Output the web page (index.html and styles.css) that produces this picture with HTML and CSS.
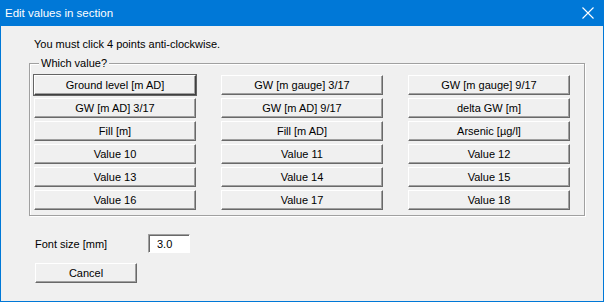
FILE: index.html
```html
<!DOCTYPE html>
<html lang="en">
<head>
<meta charset="UTF-8" />
<title>Edit values in section</title>
<link rel="stylesheet" href="styles.css">
</head>
<body>
<div class="window">
    <div class="titlebar">
        <span class="title">Edit values in section</span>
        <svg class="close" width="12" height="12" viewBox="0 0 12 12">
            <path d="M0.5 0.5 L11.5 11.5 M11.5 0.5 L0.5 11.5" stroke="#fff" stroke-width="1.1" fill="none"/>
        </svg>
    </div>

    <div class="content">
        <p class="msg">You must click 4 points anti-clockwise.</p>

        <fieldset class="group">
            <legend>Which value?</legend>
            <div class="grid">
                <button class="btn default">Ground level [m AD]</button>
                <button class="btn">GW [m gauge] 3/17</button>
                <button class="btn">GW [m gauge] 9/17</button>
                <button class="btn">GW [m AD] 3/17</button>
                <button class="btn">GW [m AD] 9/17</button>
                <button class="btn">delta GW [m]</button>
                <button class="btn">Fill [m]</button>
                <button class="btn">Fill [m AD]</button>
                <button class="btn">Arsenic [µg/l]</button>
                <button class="btn">Value 10</button>
                <button class="btn">Value 11</button>
                <button class="btn">Value 12</button>
                <button class="btn">Value 13</button>
                <button class="btn">Value 14</button>
                <button class="btn">Value 15</button>
                <button class="btn">Value 16</button>
                <button class="btn">Value 17</button>
                <button class="btn">Value 18</button>
            </div>
        </fieldset>

        <div class="font-row">
            <label class="font-label">Font size [mm]</label>
            <input class="field" type="text" value="3.0">
        </div>

        <button class="btn cancel">Cancel</button>
    </div>
</div>
</body>
</html>
```

FILE: styles.css
```css
html, body {
    margin: 0;
    padding: 0;
}
body {
    background: #f0f0f0;
    font-family: "Liberation Sans", Arial, sans-serif;
    font-size: 11px;
    color: #000;
}
.window {
    width: 604px;
    height: 302px;
    box-sizing: border-box;
    border: 1px solid #0078d7;
    border-top: none;
    background: #f0f0f0;
    display: flex;
    flex-direction: column;
}
.titlebar {
    height: 26px;
    margin: 0 -1px;
    background: #0078d7;
    color: #fff;
    display: flex;
    align-items: center;
    justify-content: space-between;
    padding: 0 10px 0 5px;
    font-size: 11.5px;
}
.close {
    display: block;
    margin-top: -1px;
}

.content {
    padding: 0 0 0 28px;
}
.msg {
    margin: 11px 0 0 5px;
    line-height: 14px;
    height: 14px;
}

/* Group box */
.group {
    margin: 6px 0 0 0;
    width: 556px;
    box-sizing: border-box;
    padding: 6px 4px 5px 4px;
    border: 1px solid #a0a0a0;
    box-shadow: inset 1px 1px #fff, 1px 1px #fff;
    min-width: 0;
}
.group legend {
    margin-left: 5px;
    padding: 0 2px;
    background: #f0f0f0;
    line-height: 12px;
}
.grid {
    display: grid;
    grid-template-columns: 162px 162px 162px;
    column-gap: 25px;
    row-gap: 3px;
}

/* Botones clasicos */
.btn {
    height: 20px;
    box-sizing: border-box;
    padding: 0;
    margin: 0;
    background: #f0f0f0;
    border: 1px solid;
    border-color: #fff #696969 #696969 #fff;
    box-shadow: inset -1px -1px #a0a0a0;
    font-family: "Liberation Sans", Arial, sans-serif;
    font-size: 11px;
    color: #000;
    line-height: 16px;
    text-align: center;
}
.btn.default {
    outline: 1px solid #646464;
    outline-offset: 0;
    border-color: #fff #404040 #404040 #fff;
}

.font-row {
    display: flex;
    align-items: center;
    margin: 18px 0 0 6px;
}
.font-label {
    width: 113px;
}
.field {
    width: 42px;
    height: 19px;
    box-sizing: border-box;
    margin: 0;
    padding: 0 0 0 8px;
    border: 1px solid;
    border-color: #a0a0a0 #fff #fff #a0a0a0;
    box-shadow: inset 1px 1px #696969;
    background: #fff;
    font-family: "Liberation Sans", Arial, sans-serif;
    font-size: 11px;
    color: #000;
}

.cancel {
    display: block;
    width: 102px;
    margin: 10px 0 0 6px;
}
```
